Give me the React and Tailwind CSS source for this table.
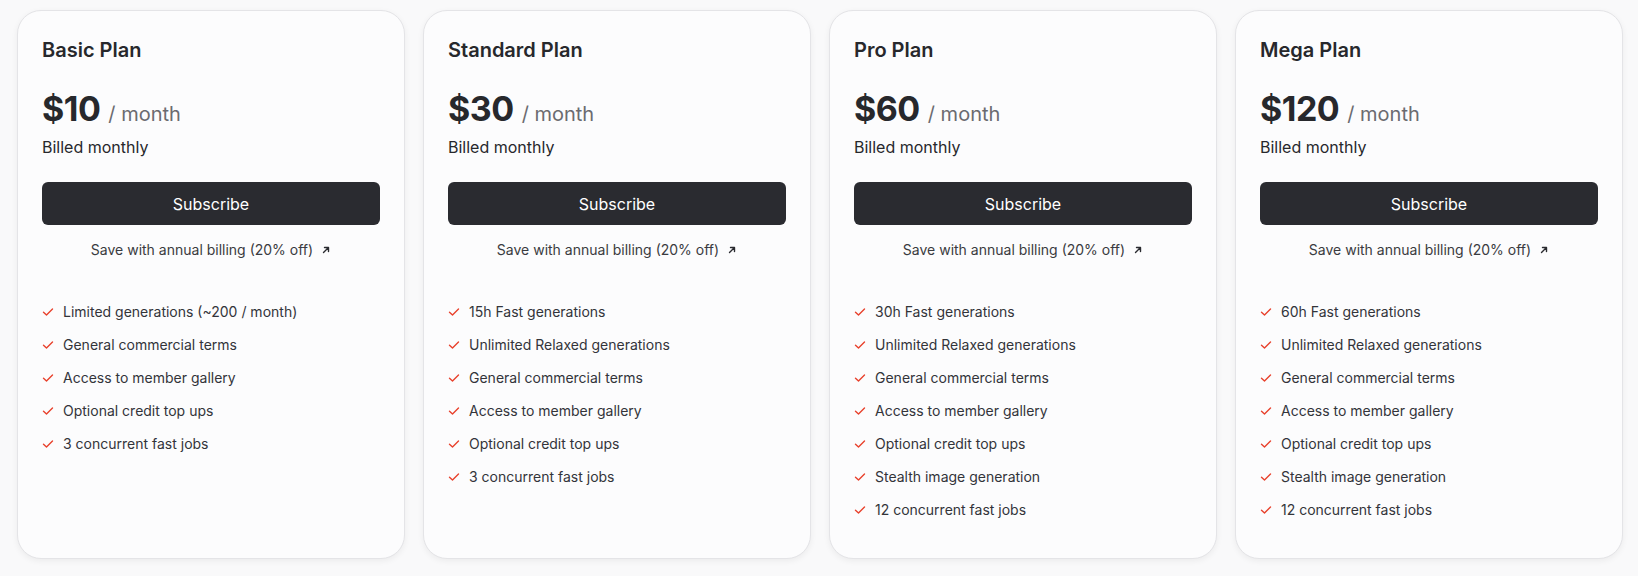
import React from "react";

const plans = [
  {
    name: "Basic Plan",
    price: "$10",
    features: [
      "Limited generations (~200 / month)",
      "General commercial terms",
      "Access to member gallery",
      "Optional credit top ups",
      "3 concurrent fast jobs",
    ],
  },
  {
    name: "Standard Plan",
    price: "$30",
    features: [
      "15h Fast generations",
      "Unlimited Relaxed generations",
      "General commercial terms",
      "Access to member gallery",
      "Optional credit top ups",
      "3 concurrent fast jobs",
    ],
  },
  {
    name: "Pro Plan",
    price: "$60",
    features: [
      "30h Fast generations",
      "Unlimited Relaxed generations",
      "General commercial terms",
      "Access to member gallery",
      "Optional credit top ups",
      "Stealth image generation",
      "12 concurrent fast jobs",
    ],
  },
  {
    name: "Mega Plan",
    price: "$120",
    features: [
      "60h Fast generations",
      "Unlimited Relaxed generations",
      "General commercial terms",
      "Access to member gallery",
      "Optional credit top ups",
      "Stealth image generation",
      "12 concurrent fast jobs",
    ],
  },
];

const Check = () => (
  <svg width="12" height="12" viewBox="0 0 12 12" fill="none" className="shrink-0">
    <path d="M1.5 6.2 L4.5 9 L10.5 3" stroke="#e8412c" strokeWidth="1.4" strokeLinecap="round" strokeLinejoin="round" />
  </svg>
);

const Arrow = () => (
  <svg width="10" height="10" viewBox="0 0 10 10" fill="none" className="ml-2 inline-block">
    <path d="M2.5 7.5 L7.5 2.5 M3.5 2.5 H7.5 V6.5" stroke="#2a2b30" strokeWidth="1.4" strokeLinecap="round" strokeLinejoin="round" />
  </svg>
);

const PlanCard = ({ plan }) => (
  <div className="flex h-[549px] flex-col rounded-3xl border border-[#e4e4e7] bg-[#fcfcfd] px-6 pt-[25px] shadow-[0_2px_6px_rgba(0,0,0,0.06)]">
    <h2 className="text-[20px] font-semibold leading-[28px] text-[#27282c]">{plan.name}</h2>
    {/* price */}
    <div className="mt-[25px] flex h-10 items-baseline">
      <span className="text-[34px] font-bold leading-[40px] tracking-[-0.5px] text-[#27282c]">{plan.price}</span>
      <span className="ml-2 text-[20px] leading-[28px] text-[#6b6b70]">/ month</span>
    </div>
    <p className="mt-[6px] text-[16px] font-normal leading-6 text-[#27282c]">Billed monthly</p>
    <button className="mt-[23px] h-[43px] w-full rounded-md bg-[#2a2b30] text-[16px] font-normal text-white">
      Subscribe
    </button>
    <a className="mt-[15px] flex items-center justify-center text-[14px] leading-5 text-[#3a3b40]">
      Save with annual billing (20% off)
      <Arrow />
    </a>
    <ul className="mt-[42px] flex flex-col gap-[13px]">
      {plan.features.map((f) => (
        <li key={f} className="flex items-center gap-[9px] text-[14px] leading-5 text-[#33343a]">
          <Check />
          {f}
        </li>
      ))}
    </ul>
  </div>
);

export default function App() {
  return (
    <div
      className="min-h-[576px] bg-[#f9f9fa] pl-[17px] pr-[15px] pt-[10px]"
      style={{ fontFamily: "Inter, 'Noto Sans', sans-serif" }}
    >
      <div className="grid grid-cols-4 gap-[18px]">
        {plans.map((p) => (
          <PlanCard key={p.name} plan={p} />
        ))}
      </div>
    </div>
  );
}
